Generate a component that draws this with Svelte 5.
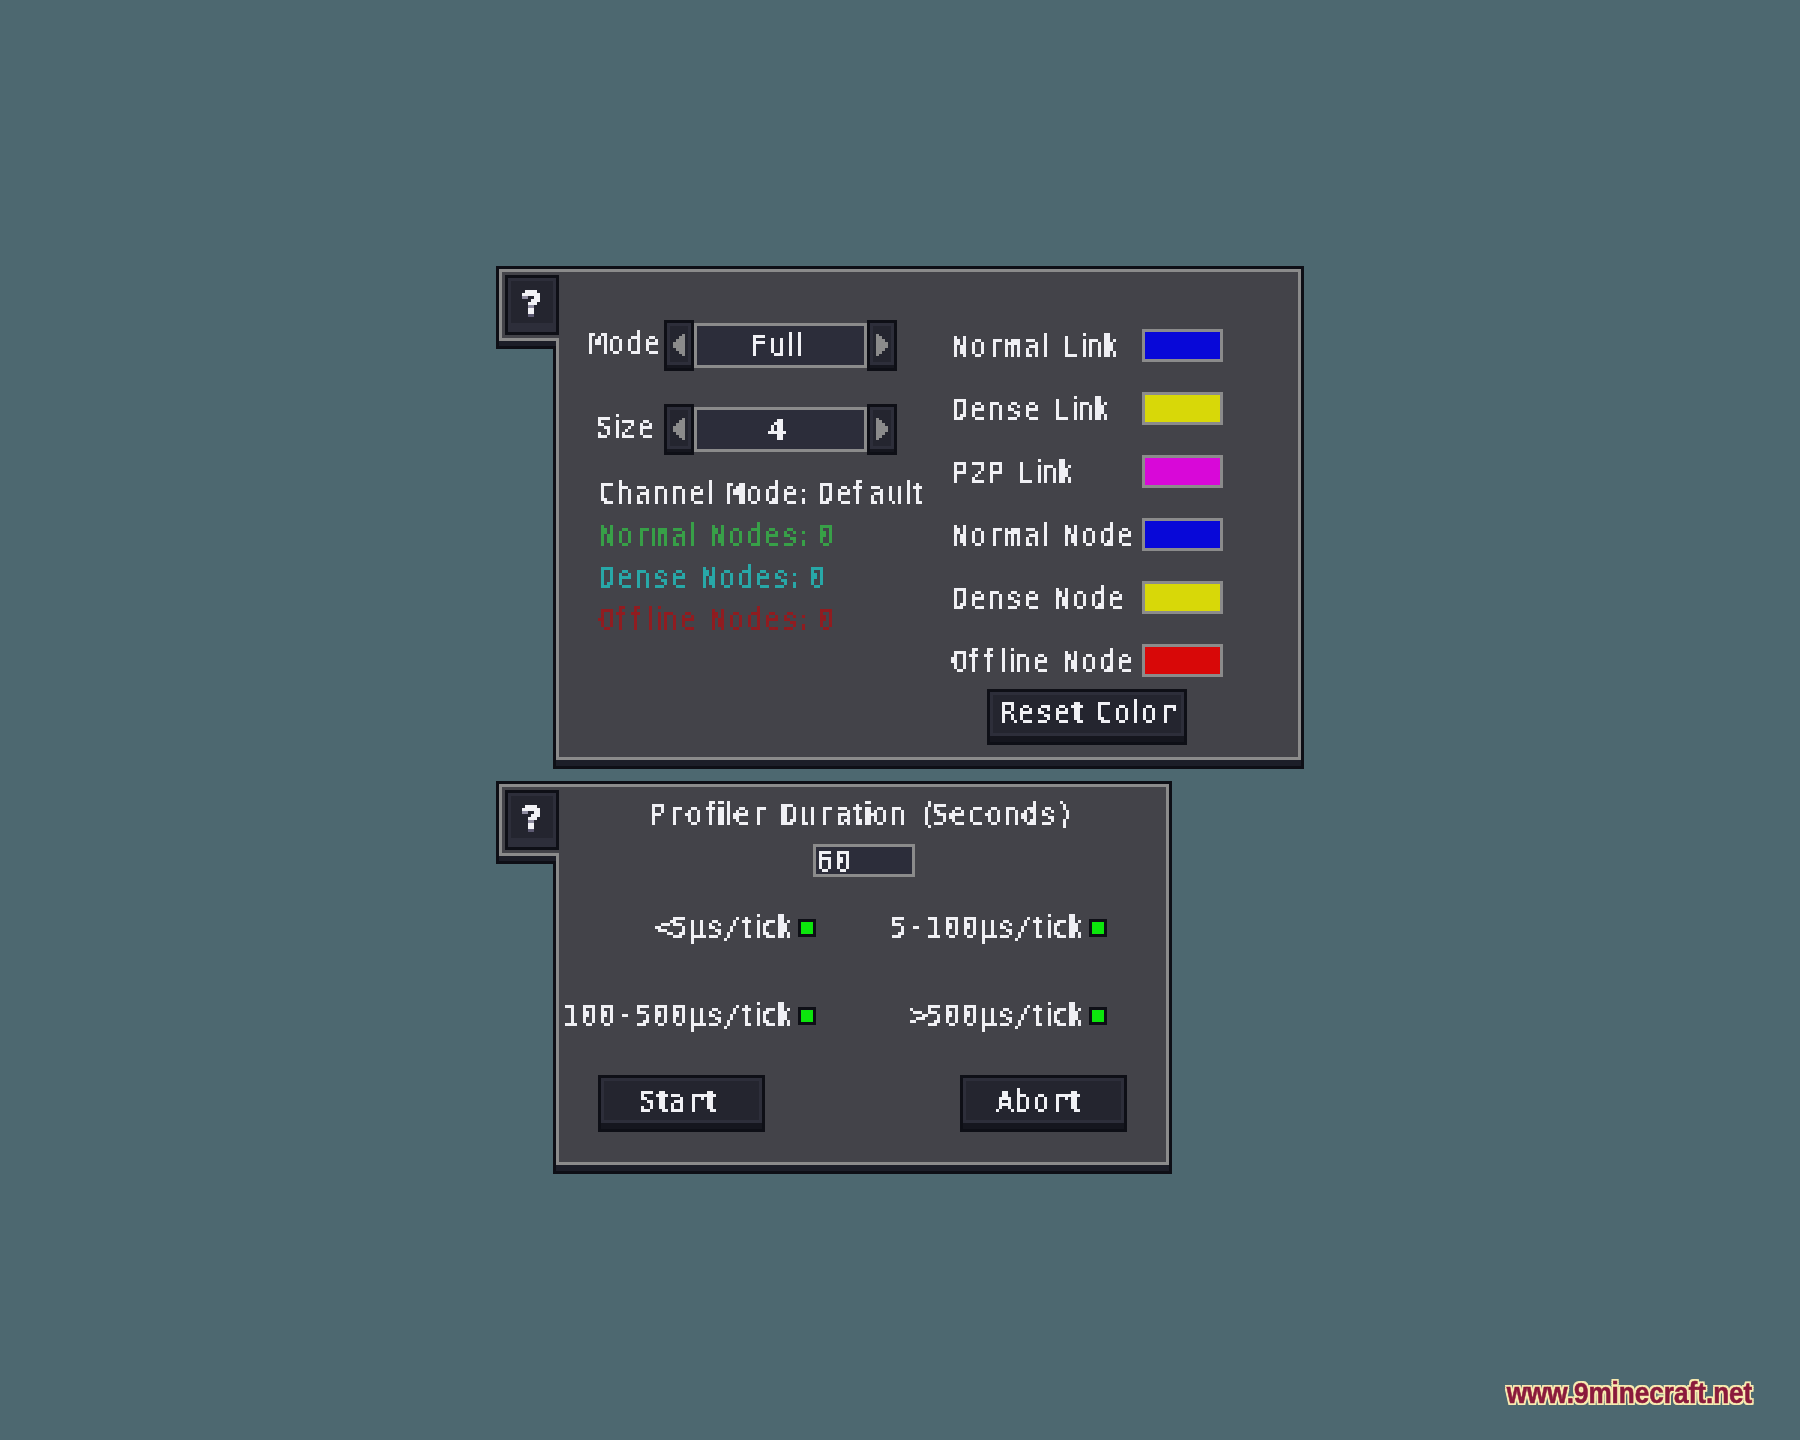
<script>
	// minecraft font advances, in px at gui scale 3
	const narrow = { ' ': 12, i: 6, l: 9, t: 12, f: 15, k: 15, ':': 6, '(': 12, ')': 12, '<': 15, '>': 15 };
	const adv = (c) => narrow[c] ?? 18;
	const thin = (c) => 'iltfk:'.includes(c);

	const links = [
		{ name: 'Normal Link', color: '#0808d8' },
		{ name: 'Dense Link', color: '#d8d808' },
		{ name: 'P2P Link', color: '#d808d8' },
		{ name: 'Normal Node', color: '#0808d8' },
		{ name: 'Dense Node', color: '#d8d808' },
		{ name: 'Offline Node', color: '#d80808' }
	];
	const toggles = ['<5µs/tick', '5-100µs/tick', '100-500µs/tick', '>500µs/tick'];
	const qmark = [
		[1, 0, 4, 1, '#f2f2f6'], [0, 1, 6, 1, '#f2f2f6'], [0, 2, 2, 1, '#8f8ca0'], [2, 2, 1, 1, '#24252f'],
		[4, 2, 2, 1, '#f2f2f6'], [3, 3, 3, 1, '#f2f2f6'], [2, 4, 3, 1, '#f2f2f6'], [2, 5, 2, 1, '#8f8ca0'],
		[2, 6, 2, 2, '#f2f2f6'], [2, 8, 2, 1, '#5d5a72']
	];
</script>

{#snippet mc(text)}
	<span class="mc">{#each text as c}<span class="ch" class:thin={thin(c)} class:squeeze={c === 'k'} style="width:{adv(c)}px">{c}</span>{/each}</span>
{/snippet}

{#snippet help()}
	<div class="tab">
		<div class="tab-in">
			<button class="help">
				<svg width="18" height="27" viewBox="0 0 6 9" shape-rendering="crispEdges">
					{#each qmark as [x, y, w, h, fill]}
						<rect {x} {y} width={w} height={h} {fill} />
					{/each}
				</svg>
			</button>
		</div>
	</div>
{/snippet}

{#snippet arrow(flip)}
	<button class="arrow">
		<svg width="12" height="22" viewBox="0 0 12 22" class:flip shape-rendering="crispEdges">
			<path d="M0 8h3V5h3V2h3V0h3v22H9v-2H6v-3H3v-3H0z" fill="#8b8b8b" />
		</svg>
	</button>
{/snippet}

{#snippet picker(label, value)}
	<div class="picker">
		<span class="picker-label">{@render mc(label)}</span>
		{@render arrow(false)}
		<div class="field">{@render mc(value)}</div>
		{@render arrow(true)}
	</div>
{/snippet}

<svg class="defs" width="0" height="0" aria-hidden="true">
	<filter id="px" x="0" y="0" width="100%" height="100%" color-interpolation-filters="sRGB">
		<feFlood x="1" y="1" width="1" height="1" />
		<feComposite width="3" height="3" />
		<feTile result="grid" />
		<feComposite in="SourceGraphic" in2="grid" operator="in" />
		<feMorphology operator="dilate" radius="1" />
		<feComponentTransfer>
			<feFuncA type="discrete" tableValues="0 1 1 1" />
		</feComponentTransfer>
	</filter>
</svg>

<main class="page">
	<section class="panel first">
		{@render help()}
		<div class="panel-in split">
			<div class="left">
				{@render picker('Mode', 'Full')}
				{@render picker('Size', '4')}
				<div class="stats">
					<div>{@render mc('Channel Mode: Default')}</div>
					<div class="green">{@render mc('Normal Nodes: 0')}</div>
					<div class="teal">{@render mc('Dense Nodes: 0')}</div>
					<div class="red">{@render mc('Offline Nodes: 0')}</div>
				</div>
			</div>
			<div class="right">
				{#each links as link}
					<div class="link">
						<span class="link-name">{@render mc(link.name)}</span>
						<span class="swatch" style="background:{link.color}"></span>
					</div>
				{/each}
				<button class="btn reset">{@render mc('Reset Color')}</button>
			</div>
		</div>
	</section>

	<section class="panel second">
		{@render help()}
		<div class="panel-in stack">
			<div class="title">{@render mc('Profiler Duration (Seconds)')}</div>
			<div class="input">{@render mc('60')}</div>
			<div class="toggles">
				{#each toggles as t}
					<div class="toggle">
						{@render mc(t)}
						<span class="led"></span>
					</div>
				{/each}
			</div>
			<div class="actions">
				<button class="btn action start">{@render mc('Start')}</button>
				<button class="btn action abort">{@render mc('Abort')}</button>
			</div>
		</div>
	</section>

	<div class="watermark">www.9minecraft.net</div>
</main>

<style>
	:global(body) {
		margin: 0;
		background: #4d6870;
	}

	.defs {
		position: absolute;
	}

	.page {
		position: relative;
		box-sizing: border-box;
		height: 1440px;
		padding: 266px 0 0 553px;
		display: flex;
		flex-direction: column;
		gap: 12px;
		background: #4d6870;
		color: #f0f0f4;
		overflow: hidden;
	}

	/* pixel text */
	.mc {
		display: inline-flex;
		height: 27px;
		margin: -2px 0 0 -2px;
		vertical-align: top;
		filter: url(#px);
	}

	.ch {
		display: block;
		flex: none;
		height: 27px;
		font: 400 29px/27px 'DejaVu Sans Mono', monospace;
		white-space: pre;
		overflow: visible;
	}

	.ch.thin {
		font-family: 'Liberation Sans', sans-serif;
		font-size: 29px;
		font-weight: 700;
	}

	.ch.squeeze {
		transform: scaleX(0.8);
		transform-origin: left center;
	}

	.panel {
		position: relative;
		box-sizing: border-box;
		display: flex;
		border: 3px solid #0e0f16;
		padding-bottom: 6px;
		background: #1c1e28;
	}

	.panel.first {
		width: 751px;
		height: 503px;
	}

	.panel.second {
		width: 619px;
		height: 393px;
	}

	.panel-in {
		flex: 1;
		box-sizing: border-box;
		border: 3px solid #8b8b8b;
		background: #434349;
	}

	/* help tab hanging off the top left corner */
	.tab {
		position: absolute;
		left: -60px;
		top: -3px;
		box-sizing: border-box;
		width: 60px;
		height: 83px;
		border: 3px solid #0e0f16;
		border-right: 0;
		background: #1c1e28;
	}

	.tab-in {
		position: absolute;
		left: 0;
		top: 0;
		box-sizing: border-box;
		width: 60px;
		height: 72px;
		padding: 3px 0 0 3px;
		border: 3px solid #8b8b8b;
		border-right: 0;
		background: #434349;
	}

	.help {
		display: flex;
		align-items: flex-start;
		box-sizing: border-box;
		width: 54px;
		height: 60px;
		padding: 12px 0 0 14px;
		border: 3px solid #0e0f16;
		background: #24252f;
		box-shadow: inset 3px 3px 0 #2d2e3a, inset -3px -9px 0 #2d2e3a;
	}

	/* first panel */
	.split {
		display: flex;
	}

	.left {
		box-sizing: border-box;
		width: 394px;
		padding: 48px 0 0 29px;
	}

	.picker {
		display: flex;
		height: 51px;
		margin-bottom: 33px;
	}

	.picker-label {
		width: 76px;
		padding-top: 12px;
		text-align: center;
	}

	.arrow {
		display: flex;
		align-items: flex-start;
		box-sizing: border-box;
		width: 30px;
		height: 51px;
		padding: 11px 0 0 6px;
		border: 3px solid #0e0f16;
		background: #24252f;
		box-shadow: inset 0 -3px 0 #15161e, inset 3px 3px 0 #2d2e3a, inset -3px -6px 0 #2d2e3a;
	}

	.arrow svg.flip {
		transform: scaleX(-1);
	}

	.field {
		box-sizing: border-box;
		width: 173px;
		height: 45px;
		margin-top: 3px;
		padding: 8px 5px 0 0;
		border: 3px solid #8b8b8b;
		background: #2c2d3a;
		text-align: center;
	}

	.stats {
		margin-top: -14px;
		padding-left: 12px;
	}

	.stats > div {
		height: 42px;
		padding-top: 8px;
		box-sizing: border-box;
	}

	.green {
		color: #38a048;
	}

	.teal {
		color: #28a8a8;
	}

	.red {
		color: #901c20;
	}

	.right {
		padding-top: 57px;
	}

	.link {
		display: flex;
		height: 33px;
		margin-bottom: 30px;
	}

	.link-name {
		width: 189px;
		padding-top: 6px;
	}

	.swatch {
		box-sizing: border-box;
		width: 81px;
		height: 33px;
		border: 3px solid #8b8b8b;
	}

	.btn {
		display: flex;
		align-items: flex-start;
		box-sizing: border-box;
		border: 3px solid #0e0f16;
		background: #24252f;
		box-shadow: inset 0 -6px 0 #15161e, inset 3px 3px 0 #2d2e3a, inset -3px -9px 0 #2d2e3a;
		color: inherit;
	}

	.reset {
		width: 200px;
		height: 56px;
		margin: -18px 0 0 34px;
		padding: 9px 0 0 11px;
	}

	/* second panel */
	.stack {
		display: flex;
		flex-direction: column;
	}

	.title {
		padding: 16px 6px 0 0;
		text-align: center;
		height: 57px;
		box-sizing: border-box;
	}

	.input {
		box-sizing: border-box;
		width: 102px;
		height: 33px;
		margin-left: 254px;
		padding: 3px 0 0 2px;
		border: 3px solid #8b8b8b;
		background: #2c2d3a;
	}

	.toggles {
		display: grid;
		grid-template-columns: 257px 291px;
		grid-auto-rows: 18px;
		row-gap: 70px;
		margin-top: 42px;
	}

	.toggle {
		display: flex;
		justify-content: flex-end;
		gap: 5px;
	}

	.toggle .mc {
		margin-top: -5px;
	}

	.led {
		box-sizing: border-box;
		width: 18px;
		height: 18px;
		border: 3px solid #0e0f16;
		background: #0ce60c;
	}

	.actions {
		display: flex;
		gap: 195px;
		margin: 50px 0 0 39px;
	}

	.action {
		width: 167px;
		height: 57px;
		padding-top: 12px;
	}

	.start {
		padding-left: 39px;
	}

	.abort {
		padding-left: 35px;
	}

	.watermark {
		position: absolute;
		right: 48px;
		bottom: 30px;
		font: 700 30px/34px 'Liberation Sans', sans-serif;
		color: #8a1a3c;
		-webkit-text-stroke: 0.6px #8a1a3c;
		transform: scaleX(0.87);
		transform-origin: right center;
		text-shadow: 2px 0 0 #f8eab0, -2px 0 0 #f8eab0, 0 2px 0 #f8eab0, 0 -2px 0 #f8eab0, 2px 2px 0 #f8eab0, -2px -2px 0 #f8eab0, 2px -2px 0 #f8eab0, -2px 2px 0 #f8eab0;
	}
</style>
